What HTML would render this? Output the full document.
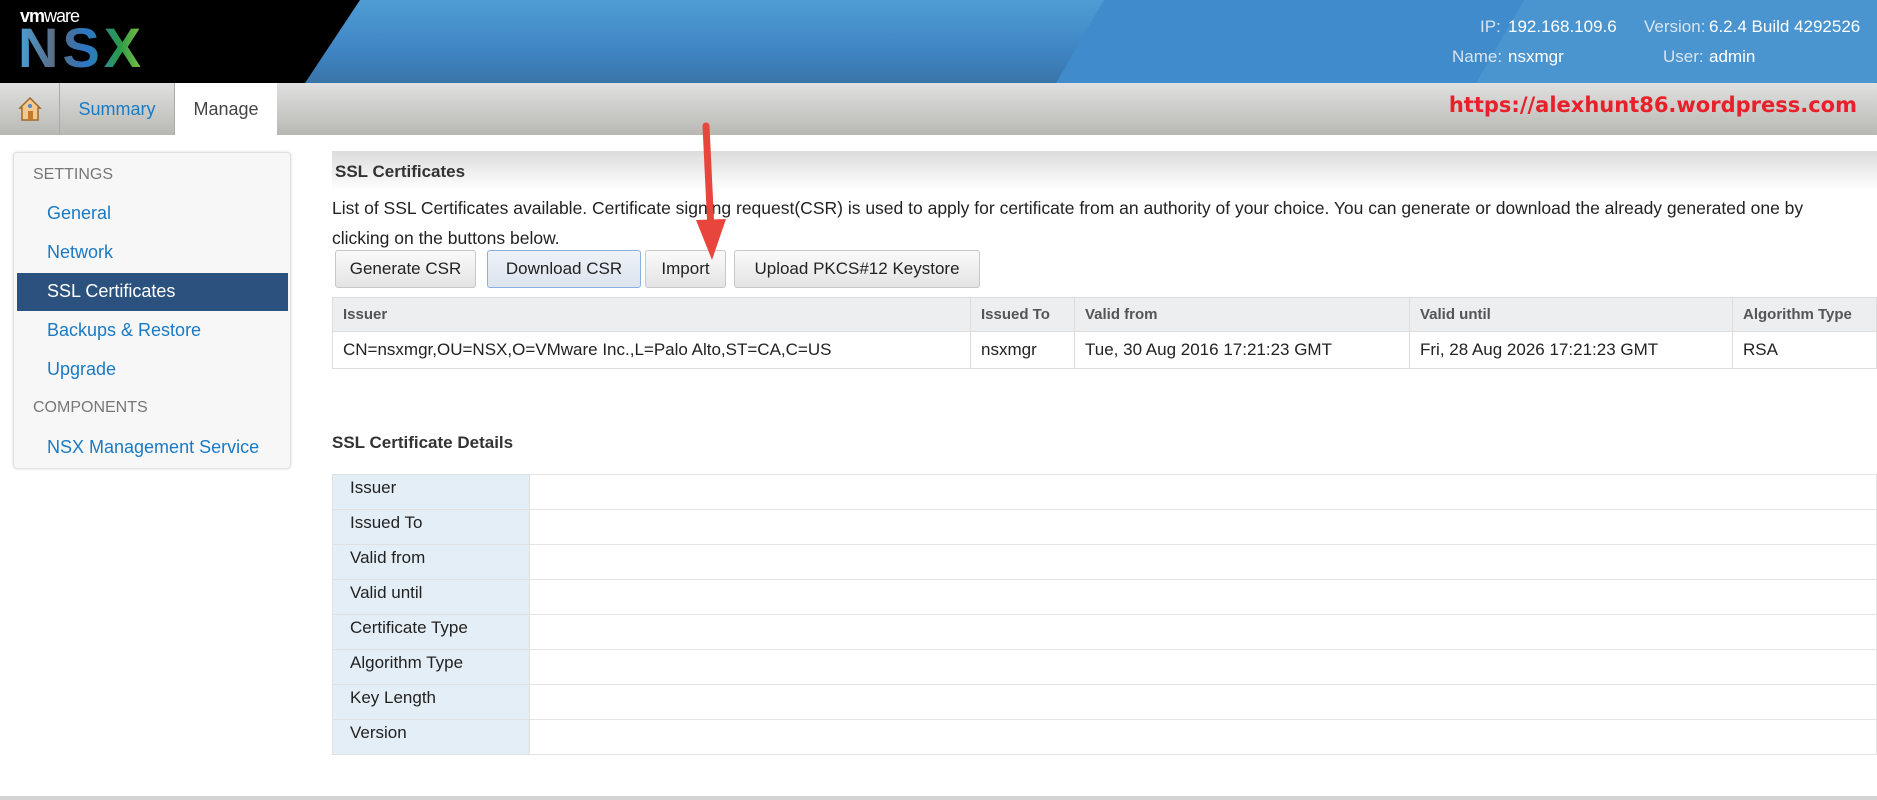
<!DOCTYPE html>
<html><head><meta charset="utf-8"><style>
*{margin:0;padding:0;box-sizing:border-box}
body{width:1877px;height:800px;overflow:hidden;background:#fff;font-family:"Liberation Sans",Arial,sans-serif;position:relative;color:#222}
.abs{position:absolute}
#hdr{left:0;top:0;width:1877px;height:83px;background:linear-gradient(180deg,#4f9cd4 0%,#3f86c4 60%,#3a74a8 100%);overflow:hidden}
#blk{left:0;top:0;width:1877px;height:83px;background:#000;clip-path:polygon(0 0,360px 0,305px 83px,0 83px)}
.hl{color:#d8e4ef;font-size:17px}
.hv{color:#fff;font-size:17px}
#tabs{left:0;top:83px;width:1877px;height:52px;background:linear-gradient(180deg,#e0e0e0,#b8b8b3)}
.tab{position:absolute;top:0;height:52px;border-right:1px solid #aaa;font-size:18px;line-height:52px;text-align:center}
#side{left:13px;top:152px;width:278px;height:317px;background:#f7f7f7;border:1px solid #e0e0e0;border-radius:4px;box-shadow:0 0 3px #ddd}
.sh{position:absolute;left:19px;font-size:16px;color:#777}
.si{position:absolute;left:33px;font-size:18px;color:#1a7ac4}
#sel{position:absolute;left:3px;top:120px;width:271px;height:38px;background:#2b527e}
.btn{position:absolute;top:250px;height:38px;border:1px solid #c8c8c8;border-radius:3px;background:linear-gradient(#fafafa,#e4e4e4);font-size:17px;line-height:36px;text-align:center;color:#222}
table{border-collapse:collapse;position:absolute}
td{font-size:17px}
</style></head><body>
<div id="hdr" class="abs">
 <div class="abs" style="left:1080px;top:0;width:700px;height:83px;background:#3f8bcc;transform:skewX(-30deg)"></div>
 <div class="abs" style="left:1500px;top:0;width:400px;height:83px;background:#4a95d0;transform:skewX(-30deg)"></div>
</div>
<div id="blk" class="abs"></div>
<div class="abs" style="left:20px;top:6px;color:#fff;font-size:18px;font-weight:bold;letter-spacing:-1px">vm<span style="font-weight:normal">ware</span></div>
<div class="abs" style="left:18px;top:20px;font-size:56px;font-weight:bold;letter-spacing:4px;line-height:56px;background:linear-gradient(90deg,#4aa0d8,#5a6a80 30%,#2a78c8 55%,#2b9a4a 80%,#8cc63f);-webkit-background-clip:text;background-clip:text;color:transparent">NSX</div>
<div class="abs hl" style="left:1480px;top:17px">IP:</div><div class="abs hv" style="left:1508px;top:17px">192.168.109.6</div>
<div class="abs hl" style="left:1644px;top:17px">Version:</div><div class="abs hv" style="left:1709px;top:17px">6.2.4 Build 4292526</div>
<div class="abs hl" style="left:1452px;top:47px">Name:</div><div class="abs hv" style="left:1508px;top:47px">nsxmgr</div>
<div class="abs hl" style="left:1663px;top:47px">User:</div><div class="abs hv" style="left:1709px;top:47px">admin</div>

<div id="tabs" class="abs">
 <div class="tab" style="left:0;width:60px"><svg width="24" height="26" viewBox="0 0 24 26" style="margin-top:13px"><path d="M12 2 L22 12 L20 12 L20 24 L4 24 L4 12 L2 12 Z" fill="#f0c890" stroke="#a0682a" stroke-width="1.5"/><rect x="10" y="15" width="5" height="9" fill="#c8782a"/><circle cx="12" cy="10" r="2" fill="#4a8ad0"/></svg></div>
 <div class="tab" style="left:60px;width:115px;color:#1a7ac4">Summary</div>
 <div class="tab" style="left:175px;width:102px;background:#fff;color:#444;border:none">Manage</div>
 <div class="abs" style="right:20px;top:10px;color:#e8202a;font-size:21px;font-weight:bold;font-family:'DejaVu Sans',sans-serif;letter-spacing:0px">https://alexhunt86.wordpress.com</div>
</div>

<div id="side" class="abs">
 <div class="sh" style="top:13px">SETTINGS</div>
 <div class="si" style="top:50px">General</div>
 <div class="si" style="top:89px">Network</div>
 <div id="sel"></div>
 <div class="si" style="top:128px;color:#fff">SSL Certificates</div>
 <div class="si" style="top:167px">Backups &amp; Restore</div>
 <div class="si" style="top:206px">Upgrade</div>
 <div class="sh" style="top:246px">COMPONENTS</div>
 <div class="si" style="top:284px">NSX Management Service</div>
</div>

<div class="abs" style="left:332px;top:151px;width:1545px;height:40px;background:linear-gradient(#dcdcdc,#fff)"></div>
<div class="abs" style="left:335px;top:162px;font-size:17px;font-weight:bold;color:#333">SSL Certificates</div>
<div class="abs" style="left:332px;top:193px;width:1530px;font-size:17.5px;line-height:30px;color:#222">List of SSL Certificates available. Certificate signing request(CSR) is used to apply for certificate from an authority of your choice. You can generate or download the already generated one by clicking on the buttons below.</div>

<div class="btn" style="left:335px;width:141px">Generate CSR</div>
<div class="btn" style="left:487px;width:154px;border-color:#8ab0e0;background:linear-gradient(#eef2f8,#dde4ee)">Download CSR</div>
<div class="btn" style="left:645px;width:81px">Import</div>
<div class="btn" style="left:734px;width:246px">Upload PKCS#12 Keystore</div>

<table style="left:332px;top:297px;width:1545px">
<tr style="height:34px;background:#eceef0;color:#555;font-weight:bold">
<td style="width:638px;border:1px solid #ddd;padding-left:10px;font-size:15px">Issuer</td>
<td style="width:104px;border:1px solid #ddd;padding-left:10px;font-size:15px">Issued To</td>
<td style="width:335px;border:1px solid #ddd;padding-left:10px;font-size:15px">Valid from</td>
<td style="width:323px;border:1px solid #ddd;padding-left:10px;font-size:15px">Valid until</td>
<td style="border:1px solid #ddd;padding-left:10px;font-size:15px">Algorithm Type</td></tr>
<tr style="height:37px">
<td style="border:1px solid #ddd;padding-left:10px">CN=nsxmgr,OU=NSX,O=VMware Inc.,L=Palo Alto,ST=CA,C=US</td>
<td style="border:1px solid #ddd;padding-left:10px">nsxmgr</td>
<td style="border:1px solid #ddd;padding-left:10px">Tue, 30 Aug 2016 17:21:23 GMT</td>
<td style="border:1px solid #ddd;padding-left:10px">Fri, 28 Aug 2026 17:21:23 GMT</td>
<td style="border:1px solid #ddd;padding-left:10px">RSA</td></tr>
</table>

<div class="abs" style="left:332px;top:433px;font-size:17px;font-weight:bold;color:#333">SSL Certificate Details</div>
<table style="left:332px;top:474px;width:1545px">
<tr style="height:35px"><td style="width:197px;background:#e4eef6;border:1px solid #e0e0e0;padding:0 0 8px 17px">Issuer</td><td style="border:1px solid #e4e4e4"></td></tr>
<tr style="height:35px"><td style="background:#e4eef6;border:1px solid #e0e0e0;padding:0 0 8px 17px">Issued To</td><td style="border:1px solid #e4e4e4"></td></tr>
<tr style="height:35px"><td style="background:#e4eef6;border:1px solid #e0e0e0;padding:0 0 8px 17px">Valid from</td><td style="border:1px solid #e4e4e4"></td></tr>
<tr style="height:35px"><td style="background:#e4eef6;border:1px solid #e0e0e0;padding:0 0 8px 17px">Valid until</td><td style="border:1px solid #e4e4e4"></td></tr>
<tr style="height:35px"><td style="background:#e4eef6;border:1px solid #e0e0e0;padding:0 0 8px 17px">Certificate Type</td><td style="border:1px solid #e4e4e4"></td></tr>
<tr style="height:35px"><td style="background:#e4eef6;border:1px solid #e0e0e0;padding:0 0 8px 17px">Algorithm Type</td><td style="border:1px solid #e4e4e4"></td></tr>
<tr style="height:35px"><td style="background:#e4eef6;border:1px solid #e0e0e0;padding:0 0 8px 17px">Key Length</td><td style="border:1px solid #e4e4e4"></td></tr>
<tr style="height:35px"><td style="background:#e4eef6;border:1px solid #e0e0e0;padding:0 0 8px 17px">Version</td><td style="border:1px solid #e4e4e4"></td></tr>
</table>
<div class="abs" style="left:0;top:796px;width:1877px;height:4px;background:#d4d4d4"></div>

<svg class="abs" style="left:690px;top:120px" width="40" height="145" viewBox="0 0 40 145">
<path d="M16 6 L21 110" stroke="#e8453c" stroke-width="7" stroke-linecap="round" fill="none"/>
<path d="M6 100 L36 99 L22 140 Z" fill="#e8453c"/>
</svg>
</body></html>
